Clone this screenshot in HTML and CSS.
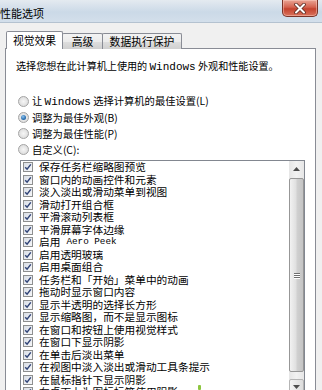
FILE: index.html
```html
<!DOCTYPE html>
<html lang="zh-CN">
<head>
<meta charset="utf-8">
<title>性能选项</title>
<link rel="stylesheet" href="styles.css">
</head>
<body>
<div class="titlebar">
  <span class="title">性能选项</span>
  <div class="close">
    <svg width="14" height="11" viewBox="0 0 14 11">
      <path d="M3 1.5 L11 9.5 M11 1.5 L3 9.5" stroke="#5a2a22" stroke-width="3.6" stroke-linecap="round"/>
      <path d="M3 1.5 L11 9.5 M11 1.5 L3 9.5" stroke="#ffffff" stroke-width="2" stroke-linecap="round"/>
    </svg>
  </div>
</div>
<div class="client">
  <div class="tabs">
    <div class="tab active t1">视觉效果</div>
    <div class="tab t2">高级</div>
    <div class="tab t3">数据执行保护</div>
  </div>
  <div class="panel">
    <p class="intro">选择您想在此计算机上使用的 <span class="lat">Windows</span> 外观和性能设置。</p>
    <div class="radios">
      <div class="radio"><span class="rb"></span><span>让 <span class="lat">Windows</span> 选择计算机的最佳设置(L)</span></div>
      <div class="radio"><span class="rb on"></span><span>调整为最佳外观(B)</span></div>
      <div class="radio"><span class="rb"></span><span>调整为最佳性能(P)</span></div>
      <div class="radio"><span class="rb"></span><span>自定义(C):</span></div>
    </div>
    <div class="listbox">
      <div class="items">
        <div class="item"><span class="cb"></span>保存任务栏缩略图预览</div>
        <div class="item"><span class="cb"></span>窗口内的动画控件和元素</div>
        <div class="item"><span class="cb"></span>淡入淡出或滑动菜单到视图</div>
        <div class="item"><span class="cb"></span>滑动打开组合框</div>
        <div class="item"><span class="cb"></span>平滑滚动列表框</div>
        <div class="item"><span class="cb"></span>平滑屏幕字体边缘</div>
        <div class="item"><span class="cb"></span>启用 <span class="lat">Aero Peek</span></div>
        <div class="item"><span class="cb"></span>启用透明玻璃</div>
        <div class="item"><span class="cb"></span>启用桌面组合</div>
        <div class="item"><span class="cb"></span>任务栏和「开始」菜单中的动画</div>
        <div class="item"><span class="cb"></span>拖动时显示窗口内容</div>
        <div class="item"><span class="cb"></span>显示半透明的选择长方形</div>
        <div class="item"><span class="cb"></span>显示缩略图，而不是显示图标</div>
        <div class="item"><span class="cb"></span>在窗口和按钮上使用视觉样式</div>
        <div class="item"><span class="cb"></span>在窗口下显示阴影</div>
        <div class="item"><span class="cb"></span>在单击后淡出菜单</div>
        <div class="item"><span class="cb"></span>在视图中淡入淡出或滑动工具条提示</div>
        <div class="item"><span class="cb"></span>在鼠标指针下显示阴影</div>
        <div class="item"><span class="cb"></span>在桌面上为图标标签使用阴影</div>
      </div>
      <div class="scrollbar">
        <div class="sbtn up"><svg width="7" height="4" viewBox="0 0 7 4"><path d="M0 4 L3.5 0 L7 4 Z" fill="#4d4d4d"/></svg></div>
        <div class="thumb"><span class="grip"></span><span class="grip"></span><span class="grip"></span></div>
        <div class="track"></div>
        <div class="sbtn down"><svg width="7" height="4" viewBox="0 0 7 4"><path d="M0 0 L7 0 L3.5 4 Z" fill="#4d4d4d"/></svg></div>
      </div>
    </div>
  </div>
</div>
<span class="cursor-dot"></span>
</body>
</html>
```

FILE: styles.css
```css
* { box-sizing: border-box; }
html, body { margin: 0; padding: 0; }
body {
  width: 322px;
  height: 390px;
  overflow: hidden;
  position: relative;
  background: #f0f0f0;
  color: #000;
  font-family: "Noto Sans CJK SC", "Microsoft YaHei", sans-serif;
}
.lat { font-family: "Liberation Mono", monospace; font-size: 11px; }
.item .lat { font-size: 9.3px; }

.titlebar {
  height: 23px;
  display: flex;
  justify-content: space-between;
  align-items: flex-start;
  background: linear-gradient(#e4eaf0, #cbd9e7 55%, #d3dfeb);
  border-bottom: 1px solid #b4c2d0;
}
.title { font-size: 11px; line-height: 12px; margin-top: 7px; margin-left: 0; }
.close {
  width: 36px;
  height: 17px;
  margin-right: 4px;
  border: 1px solid #7a3328;
  border-top: none;
  border-radius: 0 0 5px 5px;
  background: linear-gradient(#eaa595, #d4624f 45%, #c4422e 55%, #d9725c);
  display: flex;
  align-items: center;
  justify-content: center;
  box-shadow: inset 0 0 0 1px rgba(255, 210, 200, 0.45);
}

.client { padding: 8px 6px 0 5px; }
.tabs {
  display: flex;
  align-items: flex-end;
  height: 18px;
  padding-left: 1px;
  margin-bottom: -1px;
  position: relative;
  z-index: 1;
}
.tab {
  height: 16px;
  border: 1px solid #898c95;
  border-bottom: none;
  border-radius: 2px 2px 0 0;
  background: linear-gradient(#f3f3f3, #ebebeb 50%, #dedede 51%, #d0d0d0);
  font-size: 10.8px;
  line-height: 14px;
  text-align: center;
  margin-left: -1px;
}
.tab.active { height: 18px; background: #fff; line-height: 16px; position: relative; z-index: 2; }
.t1 { width: 57px; margin-left: 0; }
.t2 { width: 41px; }
.t3 { width: 80px; }

.panel {
  border: 1px solid #898c95;
  background: #fff;
  height: 360px;
  padding-top: 10px;
}
.intro { margin: 0 0 0 10px; font-size: 10.1px; line-height: 13px; white-space: nowrap; }
.radios { margin-top: 19px; padding-left: 12px; }
.radio { height: 16px; display: flex; align-items: center; gap: 3px; font-size: 10.3px; line-height: 13px; white-space: nowrap; }
.rb {
  width: 11px;
  height: 11px;
  border-radius: 50%;
  border: 1px solid #a4a4a4;
  background: radial-gradient(circle at 50% 50%, #f6f6f6 0, #e2e2e2 60%, #d4d4d4 100%);
  flex: none;
  position: relative;
}
.rb.on::after {
  content: "";
  position: absolute;
  left: 2px; top: 2px;
  width: 5px; height: 5px;
  border-radius: 50%;
  background: radial-gradient(circle at 40% 35%, #8fc3ee, #2a6fb0 60%, #17487c);
}

.listbox {
  margin: 3px 0 0 14px;
  width: 285px;
  height: 240px;
  border: 1px solid #828790;
  display: flex;
}
.items { flex: 1; padding-left: 2px; }
.item {
  height: 12.5px;
  display: flex;
  align-items: center;
  gap: 6px;
  font-size: 10.7px;
  line-height: 12.5px;
  white-space: nowrap;
}
.cb {
  width: 10px;
  height: 10px;
  flex: none;
  border: 1px solid #8e8f8f;
  background:
    url("data:image/svg+xml;utf8,<svg xmlns='http://www.w3.org/2000/svg' width='8' height='8' viewBox='0 0 8 8'><path d='M1.2 4.2 L3.1 6.2 L6.8 1.4' fill='none' stroke='%23304478' stroke-width='1.5'/></svg>") center/8px 8px no-repeat,
    linear-gradient(135deg, #d9dee6, #f6f7f9);
}

.scrollbar {
  width: 15px;
  display: flex;
  flex-direction: column;
  background: linear-gradient(to right, #e6e6e6, #f2f2f2 50%, #e6e6e6);
}
.sbtn {
  height: 15px;
  flex: none;
  display: flex;
  align-items: center;
  justify-content: center;
}
.thumb {
  margin-top: 2px;
  height: 194px;
  flex: none;
  border: 1px solid #979797;
  border-radius: 2px;
  background: linear-gradient(to right, #f2f2f2, #e0e0e0 45%, #d0d0d0 55%, #c4c4c4);
  display: flex;
  flex-direction: column;
  align-items: center;
  justify-content: center;
  gap: 1px;
}
.grip { width: 6px; height: 1px; background: #6f6f6f; box-shadow: 0 1px 0 #fff; }
.track { height: 7px; flex: none; }
.sbtn.down { border: 1px solid #b5b5b5; border-radius: 2px; background: linear-gradient(to right, #f4f4f4, #dcdcdc); }

.cursor-dot {
  position: absolute;
  left: 198px;
  top: 385px;
  width: 3px;
  height: 5px;
  border-radius: 1px;
  background: #8dc63f;
}
```
